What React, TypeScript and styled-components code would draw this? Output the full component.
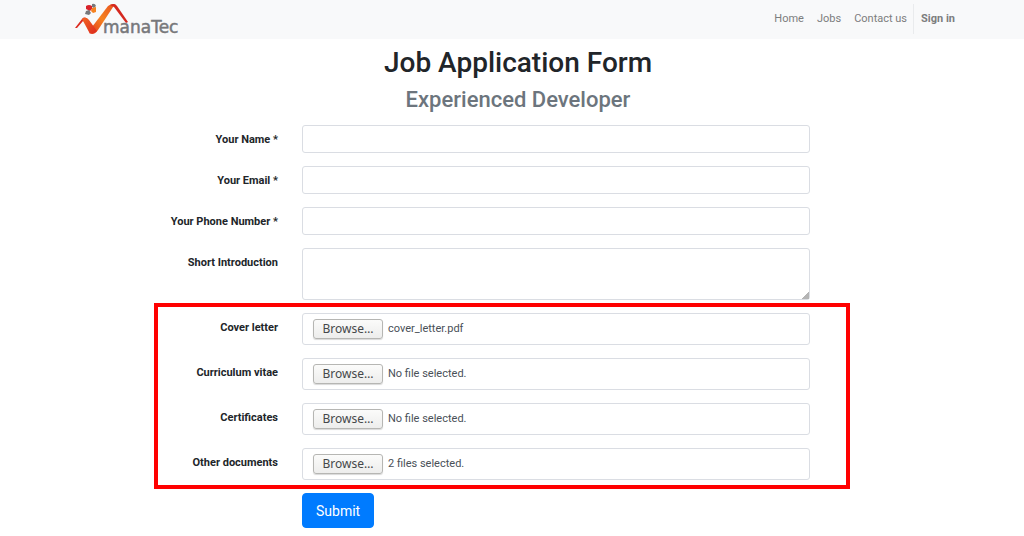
import React, { useRef, useState } from "react";
import styled, { createGlobalStyle } from "styled-components";

const GlobalStyle = createGlobalStyle`
  *, *::before, *::after { box-sizing: border-box; }
  body {
    margin: 0;
    background: #fff;
    color: #212529;
    font-family: Roboto, "Liberation Sans", sans-serif;
    font-size: 11px;
    line-height: 18px;
  }
`;

const Header = styled.header`
  display: flex;
  align-items: center;
  justify-content: space-between;
  height: 39px;
  padding: 0 62px 0 74px;
  background: #f8f9fa;
`;

const LogoLink = styled.a`
  display: block;
  line-height: 0;
`;

const Nav = styled.nav`
  display: flex;
  align-items: center;
  height: 30px;
  margin-bottom: 1px;
`;

const NavLink = styled.a<{ $strong?: boolean }>`
  display: flex;
  align-items: center;
  height: 100%;
  padding: 0 ${(p) => (p.$strong ? "7px" : "6px")};
  border-left: 1px solid ${(p) => (p.$strong ? "#e9ebed" : "transparent")};
  color: #7c7d7e;
  font-weight: ${(p) => (p.$strong ? 700 : 400)};
  text-decoration: none;
`;

const Main = styled.main`
  padding: 6px 50px 8px 62px;
`;

const Title = styled.h1`
  margin: 0;
  font-size: 28px;
  font-weight: 500;
  line-height: 36px;
  text-align: center;
`;

const Subtitle = styled.h2`
  margin: 6px 0 12px;
  color: #6c757d;
  font-size: 22px;
  font-weight: 500;
  line-height: 26px;
  text-align: center;
`;

const Form = styled.form`
  display: flex;
  flex-direction: column;
  gap: 13px;
`;

const Row = styled.div`
  display: grid;
  grid-template-columns: 3fr 7fr 2fr;
  align-items: start;
`;

const Label = styled.label`
  padding: 6px 12px 0;
  font-weight: 700;
  text-align: right;
`;

const Cell = styled.div`
  grid-column: 2;
  display: flex;
  min-width: 0;
  padding: 0 12px;
`;

const TextInput = styled.input`
  width: 100%;
  height: 28px;
  padding: 4px 9px;
  border: 1px solid #dadde3;
  border-radius: 3px;
  color: #495057;
  font: inherit;
`;

const TextArea = styled.textarea`
  width: 100%;
  height: 52px;
  padding: 4px 9px;
  border: 1px solid #dadde3;
  border-radius: 3px;
  color: #495057;
  font: inherit;
  resize: vertical;

  &::-webkit-resizer {
    background: linear-gradient(135deg, transparent 75%, #b4b4b4 75%);
  }
`;

const Attachments = styled.div`
  position: relative;
  display: flex;
  flex-direction: column;
  gap: 13px;

  &::after {
    content: "";
    position: absolute;
    inset: -10px 124px -9px 92px;
    border: 4px solid #f00;
    pointer-events: none;
  }
`;

const FileBox = styled.div`
  display: flex;
  align-items: center;
  gap: 5px;
  width: 100%;
  height: 32px;
  padding: 0 10px;
  border: 1px solid #dadde3;
  border-radius: 3px;
  color: #495057;
`;

const HiddenFile = styled.input`
  position: absolute;
  width: 1px;
  height: 1px;
  overflow: hidden;
  opacity: 0;
`;

const BrowseButton = styled.button`
  width: 70px;
  height: 20px;
  padding: 0;
  border: 1px solid #b6b6b3;
  border-radius: 3px;
  background: linear-gradient(#fbfbfa, #ededec);
  box-shadow: 0 1px 1px #d9d9d9;
  color: #45484a;
  font-family: "Noto Sans", sans-serif;
  font-size: 12px;
  line-height: 18px;
`;

const SubmitButton = styled.button`
  height: 35px;
  padding: 0 13px;
  border: 1px solid #007bff;
  border-radius: 4px;
  background: #007bff;
  color: #fff;
  font-family: inherit;
  font-size: 14px;
`;

function Logo() {
  return (
    <svg width="108" height="36" viewBox="0 0 108 36" role="img" aria-label="manaTec">
      <defs>
        <linearGradient id="left" x1="0" y1="0" x2="1" y2="1">
          <stop offset="0" stopColor="#f26522" />
          <stop offset="1" stopColor="#dc2a1f" />
        </linearGradient>
        <linearGradient id="right" x1="0" y1="1" x2="1" y2="0">
          <stop offset="0" stopColor="#e2341f" />
          <stop offset="0.5" stopColor="#f58220" />
          <stop offset="1" stopColor="#e8501f" />
        </linearGradient>
      </defs>
      <path d="M1 26 8 17Q10 14.5 13 16.5L11 20 9 19 3 26Z" fill="#dc2a1f" />
      <path d="M34 4Q37 1.5 41 2L24 28Q20 34 15 31L18 25Z" fill="url(#right)" />
      <path d="M8 17Q12 14 15 18L23 29Q19 33 15 30Z" fill="url(#left)" />
      <path d="M36 3Q41 0.5 43 4L54 20 52 21 40 5Z" fill="#d5281f" />
      <path d="M12 4Q15 2 18 4V7L16 9 12 7Z" fill="#d8232a" />
      <path d="M18 2Q21 1 22 4L20 6 18 5Z" fill="#77787b" />
      <path d="M18 6 22 5V10L19 11 17 9Z" fill="#f58220" />
      <path d="M12 9 15 8 17 11 15 13 11 12Z" fill="#77787b" />
      <text x="29" y="31" fill="#77787b" stroke="#77787b" strokeWidth="0.5" fontFamily="DejaVu Sans, sans-serif" fontSize="17">
        manaTec
      </text>
    </svg>
  );
}

function FileField({ id, label, initial }: { id: string; label: string; initial: string }) {
  const input = useRef<HTMLInputElement>(null);
  const [status, setStatus] = useState(initial);

  const onChange = (e: React.ChangeEvent<HTMLInputElement>) => {
    const files = e.target.files;
    if (!files || files.length === 0) setStatus("No file selected.");
    else setStatus(files.length === 1 ? files[0].name : `${files.length} files selected.`);
  };

  return (
    <Row>
      <Label htmlFor={id}>{label}</Label>
      <Cell>
        <FileBox>
          <HiddenFile ref={input} id={id} type="file" multiple tabIndex={-1} onChange={onChange} />
          <BrowseButton type="button" onClick={() => input.current?.click()}>
            Browse…
          </BrowseButton>
          <span>{status}</span>
        </FileBox>
      </Cell>
    </Row>
  );
}

const textFields = [
  { id: "name", label: "Your Name *", type: "text" },
  { id: "email", label: "Your Email *", type: "email" },
  { id: "phone", label: "Your Phone Number *", type: "tel" },
];

const fileFields = [
  { id: "cover", label: "Cover letter", initial: "cover_letter.pdf" },
  { id: "cv", label: "Curriculum vitae", initial: "No file selected." },
  { id: "certificates", label: "Certificates", initial: "No file selected." },
  { id: "other", label: "Other documents", initial: "2 files selected." },
];

export default function App() {
  return (
    <>
      <GlobalStyle />
      <Header>
        <LogoLink href="#home">
          <Logo />
        </LogoLink>
        <Nav>
          <NavLink href="#home">Home</NavLink>
          <NavLink href="#jobs">Jobs</NavLink>
          <NavLink href="#contact">Contact us</NavLink>
          <NavLink href="#signin" $strong>
            Sign in
          </NavLink>
        </Nav>
      </Header>
      <Main>
        <Title>Job Application Form</Title>
        <Subtitle>Experienced Developer</Subtitle>
        <Form onSubmit={(e) => e.preventDefault()}>
          {textFields.map((f) => (
            <Row key={f.id}>
              <Label htmlFor={f.id}>{f.label}</Label>
              <Cell>
                <TextInput id={f.id} type={f.type} required />
              </Cell>
            </Row>
          ))}
          <Row>
            <Label htmlFor="intro">Short Introduction</Label>
            <Cell>
              <TextArea id="intro" />
            </Cell>
          </Row>
          <Attachments>
            {fileFields.map((f) => (
              <FileField key={f.id} {...f} />
            ))}
          </Attachments>
          <Row>
            <Cell>
              <SubmitButton type="submit">Submit</SubmitButton>
            </Cell>
          </Row>
        </Form>
      </Main>
    </>
  );
}
